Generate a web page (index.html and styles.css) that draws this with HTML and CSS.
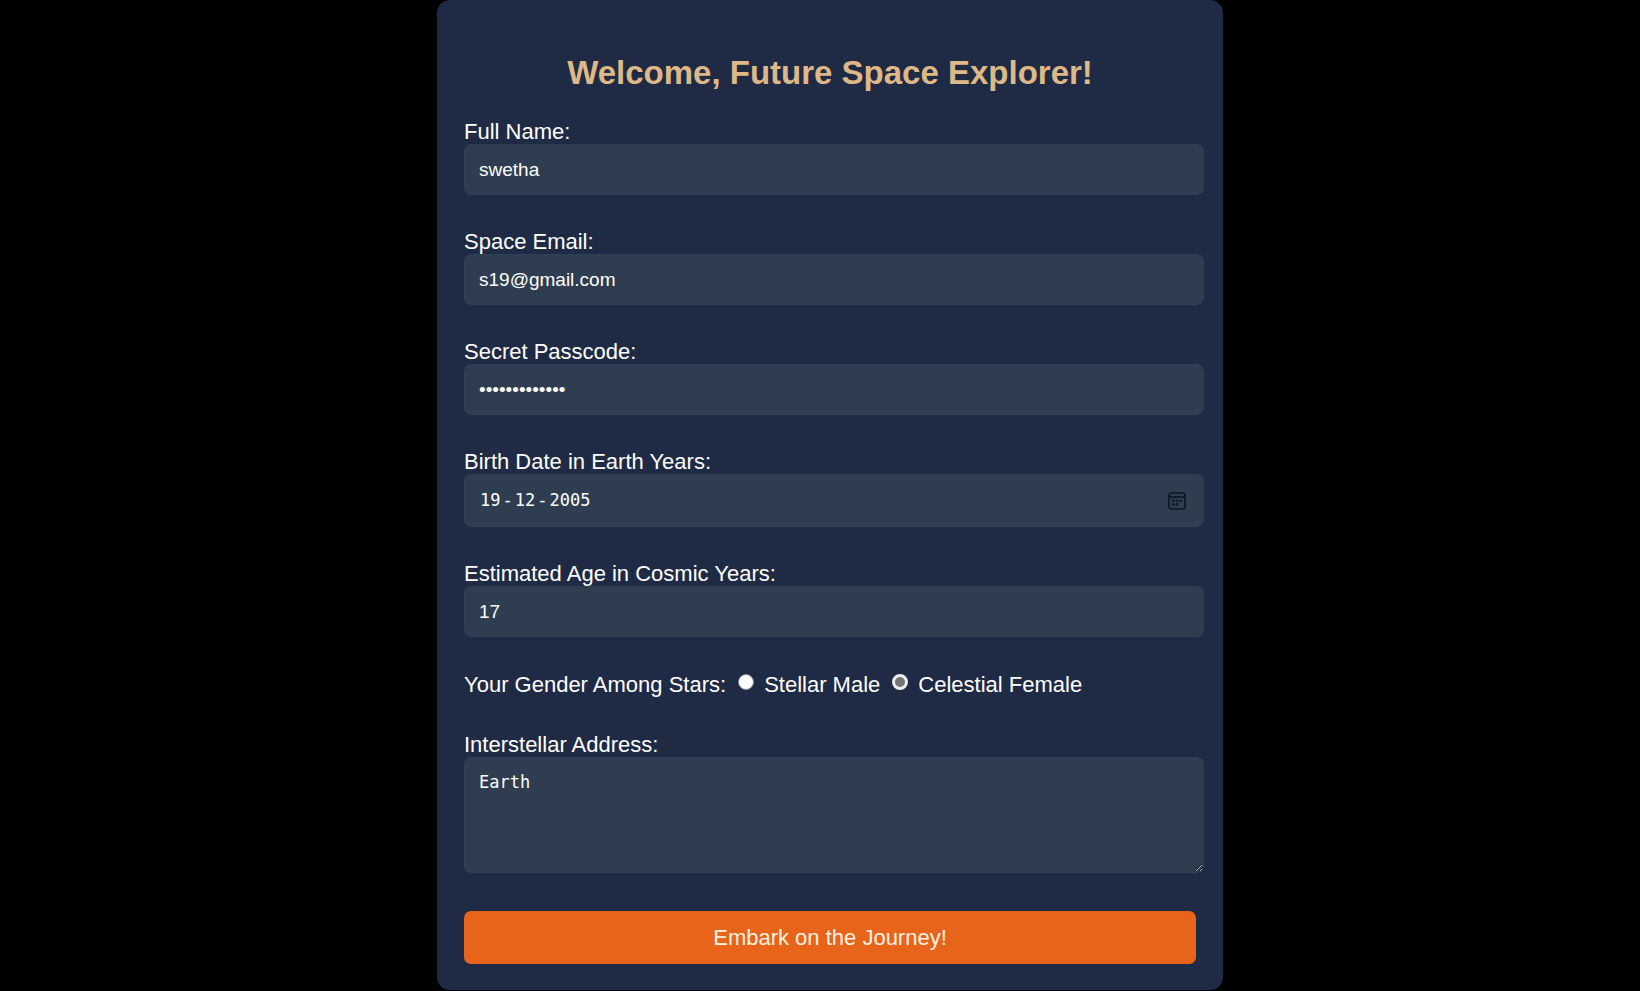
FILE: index.html
```html
<!DOCTYPE html>
<html lang="en">
<head>
<meta charset="utf-8">
<meta name="viewport" content="width=device-width, initial-scale=1">
<title>Space Explorer Registration</title>
<link rel="stylesheet" href="styles.css">
</head>
<body>
<main class="card">
  <h1 class="title">Welcome, Future Space Explorer!</h1>
  <form class="form">
    <div class="field">
      <label for="name">Full Name:</label>
      <input class="control" type="text" id="name" value="swetha">
    </div>
    <div class="field">
      <label for="email">Space Email:</label>
      <input class="control" type="email" id="email" value="s19@gmail.com">
    </div>
    <div class="field">
      <label for="passcode">Secret Passcode:</label>
      <input class="control" type="password" id="passcode" value="stardust12345">
    </div>
    <div class="field">
      <label for="day">Birth Date in Earth Years:</label>
      <div class="control date">
        <input class="date-part" type="text" id="day" inputmode="numeric" maxlength="2" value="19">
        <span class="date-dash">-</span>
        <input class="date-part" type="text" aria-label="Month" inputmode="numeric" maxlength="2" value="12">
        <span class="date-dash">-</span>
        <input class="date-part date-year" type="text" aria-label="Year" inputmode="numeric" maxlength="4" value="2005">
        <button class="date-picker" type="button" aria-label="Open calendar">
          <svg width="18" height="18" viewBox="0 0 18 18" fill="none" stroke="currentColor">
            <rect x="1" y="1" width="16" height="16" rx="2.5" stroke-width="1.7"/>
            <path d="M1 5h16" stroke-width="1.7"/>
            <g fill="currentColor" stroke="none">
              <circle cx="5.4" cy="8.8" r="1.3"/><circle cx="9" cy="8.8" r="1.3"/><circle cx="12.6" cy="8.8" r="1.3"/>
              <circle cx="5.4" cy="12.4" r="1.3"/><circle cx="9" cy="12.4" r="1.3"/>
            </g>
          </svg>
        </button>
      </div>
    </div>
    <div class="field">
      <label for="age">Estimated Age in Cosmic Years:</label>
      <input class="control" type="text" inputmode="numeric" id="age" value="17">
    </div>
    <div class="choices" role="radiogroup" aria-labelledby="gender">
      <span id="gender">Your Gender Among Stars:</span>
      <label class="choice"><input class="radio" type="radio" name="gender" value="male">Stellar Male</label>
      <label class="choice"><input class="radio" type="radio" name="gender" value="female" checked>Celestial Female</label>
    </div>
    <div class="field">
      <label for="address">Interstellar Address:</label>
      <textarea class="control address" id="address" rows="4">Earth</textarea>
    </div>
    <button class="submit" type="submit">Embark on the Journey!</button>
  </form>
</main>
</body>
</html>
```
FILE: styles.css
```css
* {
  box-sizing: border-box;
}

body {
  margin: 0;
  padding-left: 20px;
  background: #000;
  color: #fff;
  font-family: "Liberation Sans", Arial, sans-serif;
  font-size: 22px;
  line-height: 25px;
}

.card {
  max-width: 786px;
  margin: 0 auto;
  padding: 53px 27px 26px;
  border-radius: 13px;
  background: #1f2a44;
}

.title {
  margin: 0 0 27px;
  color: #deb887;
  font-size: 33px;
  line-height: 39px;
  text-align: center;
}

.form {
  display: flex;
  flex-direction: column;
  gap: 34px;
}

/* Fields run slightly past the button on the right. */
.field {
  display: flex;
  flex-direction: column;
  margin-right: -8px;
}

.control {
  width: 100%;
  margin: 0;
  padding: 14px;
  border: 1px solid #2f3f58;
  border-radius: 7px;
  background: #2e3e50;
  color: #fff;
  font-family: inherit;
  font-size: 19px;
  line-height: 21px;
}

.date,
.address {
  font-family: "DejaVu Sans Mono", monospace;
  font-size: 17px;
}

.date {
  display: flex;
  align-items: center;
  padding: 15px 17px 15px 15px;
}

.date-part {
  width: 2ch;
  padding: 0;
  border: 0;
  background: none;
  color: inherit;
  font: inherit;
}

.date-year {
  width: 4ch;
}

.date-dash {
  padding: 0 2px;
}

.date-picker {
  display: flex;
  margin-left: auto;
  padding: 0;
  border: 0;
  background: none;
  color: #0d1725;
}

.address {
  display: block;
  height: 116px;
}

.choices {
  display: flex;
  flex-wrap: wrap;
  gap: 12px;
  padding: 1px 0;
}

.choice {
  display: flex;
  gap: 10px;
}

.radio {
  appearance: none;
  width: 16px;
  height: 16px;
  margin: 2px 0 0;
  border: 1px solid #8a8d94;
  border-radius: 50%;
  background: #fff;
}

.radio:checked {
  border: 3px solid #eee;
  background: #757575;
}

.submit {
  margin-top: 4px;
  padding: 14px;
  border: 0;
  border-radius: 7px;
  background: #e8641b;
  color: #fff3e0;
  font: inherit;
}
```
